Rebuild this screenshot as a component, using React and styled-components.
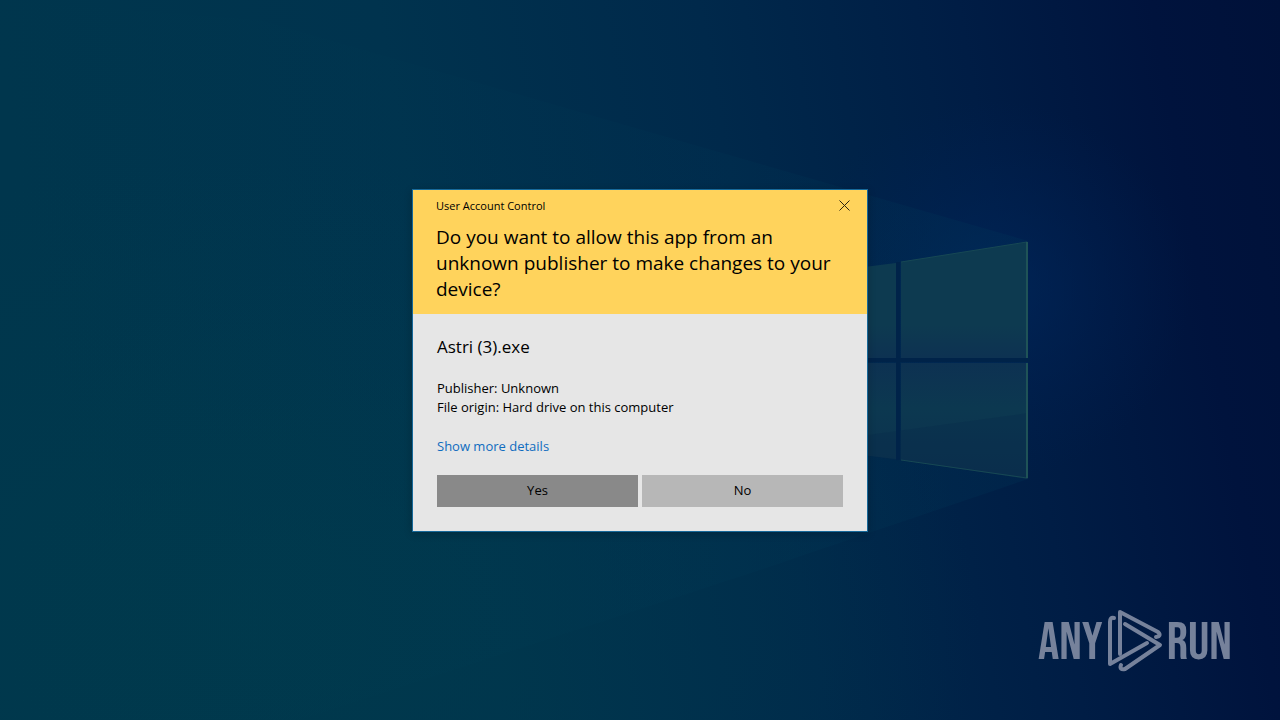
import React, { useState } from "react";
import styled, { createGlobalStyle } from "styled-components";

const GlobalStyle = createGlobalStyle`
  body {
    margin: 0;
    background: #001f42;
    font-family: "Open Sans", "Noto Sans", sans-serif;
    color: #000;
  }
`;

const Desktop = styled.main`
  position: relative;
  display: flex;
  justify-content: center;
  align-items: center;
  min-height: 100vh;
  overflow: hidden;
`;

const WallpaperSvg = styled.svg`
  position: absolute;
  inset: 0;
  width: 100%;
  height: 100%;
`;

const Dialog = styled.section`
  position: relative;
  box-sizing: border-box;
  width: 456px;
  max-width: 100%;
  border: 1px solid #17699a;
  background: #e6e6e6;
  box-shadow: 0 2px 8px rgba(0, 0, 0, 0.2);
`;

const Header = styled.header`
  padding: 0 23px 12px;
  background: #ffd35c;
`;

const TitleBar = styled.div`
  display: flex;
  justify-content: space-between;
  align-items: center;
  height: 32px;
  font-size: 11px;
`;

const CloseButton = styled.button`
  display: flex;
  justify-content: center;
  align-items: center;
  width: 46px;
  height: 32px;
  margin-right: -23px;
  padding: 0;
  border: none;
  background: transparent;
`;

const Question = styled.h1`
  margin: 0;
  padding-top: 2px;
  font-size: 19px;
  font-weight: 400;
  line-height: 26px;
`;

const Body = styled.div`
  padding: 20px 24px 24px;
  font-size: 13px;
  line-height: 19px;
`;

const AppName = styled.h2`
  margin: 0 0 19px;
  font-size: 17px;
  font-weight: 400;
  line-height: 26px;
`;

const Detail = styled.p`
  margin: 0;
`;

const MoreLink = styled.a`
  display: inline-block;
  margin: 20px 0 19px;
  color: #0f6cbf;
  text-decoration: none;
`;

const Buttons = styled.div`
  display: grid;
  grid-template-columns: 1fr 1fr;
  gap: 4px;
`;

const Button = styled.button`
  height: 32px;
  padding: 0;
  border: none;
  background: ${props => (props.$primary ? "#898989" : "#b7b7b7")};
  color: #000;
  font: inherit;
`;

const Watermark = styled.div`
  position: absolute;
  right: 48px;
  bottom: 48px;
  display: flex;
  align-items: flex-end;
  gap: 4px;
  color: #76829b;
`;

const Letters = styled.span`
  font-family: "Bebas Neue", "Roboto Condensed", "Liberation Sans Narrow",
    sans-serif;
  font-size: 53px;
  font-weight: 300;
  line-height: 58px;
`;

const Wallpaper = () => (
  <WallpaperSvg
    viewBox="0 0 1280 720"
    preserveAspectRatio="xMidYMid slice"
    aria-hidden="true"
  >
    <defs>
      <linearGradient id="sky" x1="0" y1="0.1" x2="1" y2="0">
        <stop offset="0" stopColor="#00364d" />
        <stop offset="0.3" stopColor="#00334e" />
        <stop offset="0.55" stopColor="#00294b" />
        <stop offset="0.75" stopColor="#001d45" />
        <stop offset="0.9" stopColor="#00133d" />
        <stop offset="1" stopColor="#001139" />
      </linearGradient>
      <radialGradient id="teal">
        <stop offset="0" stopColor="#003a4c" stopOpacity="0.8" />
        <stop offset="1" stopColor="#003a4c" stopOpacity="0" />
      </radialGradient>
      <radialGradient id="glow">
        <stop offset="0" stopColor="#00285e" stopOpacity="0.7" />
        <stop offset="1" stopColor="#002054" stopOpacity="0" />
      </radialGradient>
      <linearGradient id="beam" x1="0" y1="0" x2="1" y2="0">
        <stop offset="0" stopColor="#004050" stopOpacity="0" />
        <stop offset="1" stopColor="#003c5c" stopOpacity="0.2" />
      </linearGradient>
      <linearGradient id="pane" x1="0" y1="0" x2="0" y2="1">
        <stop offset="0" stopColor="#0d3a50" />
        <stop offset="0.35" stopColor="#0d3a50" />
        <stop offset="0.5" stopColor="#0d3152" />
        <stop offset="0.7" stopColor="#0c3850" />
        <stop offset="1" stopColor="#0c304e" />
      </linearGradient>
    </defs>
    <rect width="1280" height="720" fill="url(#sky)" />
    <ellipse cx="260" cy="620" rx="720" ry="460" fill="url(#teal)" />
    <ellipse cx="990" cy="290" rx="200" ry="190" fill="url(#glow)" />
    <path d="M260 20L1028 241V479L760 570L300 720H0V0Z" fill="url(#beam)" />
    <path
      d="M700 288L896 263V358H700ZM901 262L1028 242V358H901ZM700 363H896V459L700 436ZM901 363H1028V479L901 460Z"
      fill="url(#pane)"
    />
    <path d="M868 435L1028 413V479L868 456Z" fill="#0a2b4a" opacity="0.35" />
    <path
      d="M901 262L1027 242M1027 478L901 460"
      fill="none"
      stroke="#174854"
    />
    <path d="M1027 242V358M1027 363V478" stroke="#1f5357" strokeWidth="2" />
    <path d="M898 262V460M868 360H1030" stroke="#002349" strokeWidth="4" />
  </WallpaperSvg>
);

const PlayMark = () => (
  <svg width="56" height="62" viewBox="0 0 56 62" aria-hidden="true">
    <g
      fill="none"
      stroke="currentColor"
      strokeWidth="4"
      strokeLinecap="round"
      strokeLinejoin="round"
    >
      <path d="M7 8Q3 7 3 12V54L40 33" />
      <path d="M13 44V2L51 22Q55 26 49 27" />
      <path d="M18 14L53 35L18 59Q12 60 14 55" />
    </g>
  </svg>
);

export default function App() {
  const [open, setOpen] = useState(true);
  const close = () => setOpen(false);

  return (
    <Desktop>
      <GlobalStyle />
      <Wallpaper />
      {open && (
        <Dialog role="dialog" aria-labelledby="question">
          <Header>
            <TitleBar>
              User Account Control
              <CloseButton aria-label="Close" onClick={close}>
                <svg width="11" height="11" viewBox="0 0 11 11">
                  <path d="M0.5 0.5L10.5 10.5M10.5 0.5L0.5 10.5" stroke="#2b2410" />
                </svg>
              </CloseButton>
            </TitleBar>
            <Question id="question">
              Do you want to allow this app from an unknown publisher to make
              changes to your device?
            </Question>
          </Header>
          <Body>
            <AppName>Astri (3).exe</AppName>
            <Detail>Publisher: Unknown</Detail>
            <Detail>File origin: Hard drive on this computer</Detail>
            <MoreLink href="#details">Show more details</MoreLink>
            <Buttons>
              <Button $primary onClick={close}>
                Yes
              </Button>
              <Button onClick={close}>No</Button>
            </Buttons>
          </Body>
        </Dialog>
      )}
      <Watermark>
        <Letters>ANY</Letters>
        <PlayMark />
        <Letters>RUN</Letters>
      </Watermark>
    </Desktop>
  );
}
